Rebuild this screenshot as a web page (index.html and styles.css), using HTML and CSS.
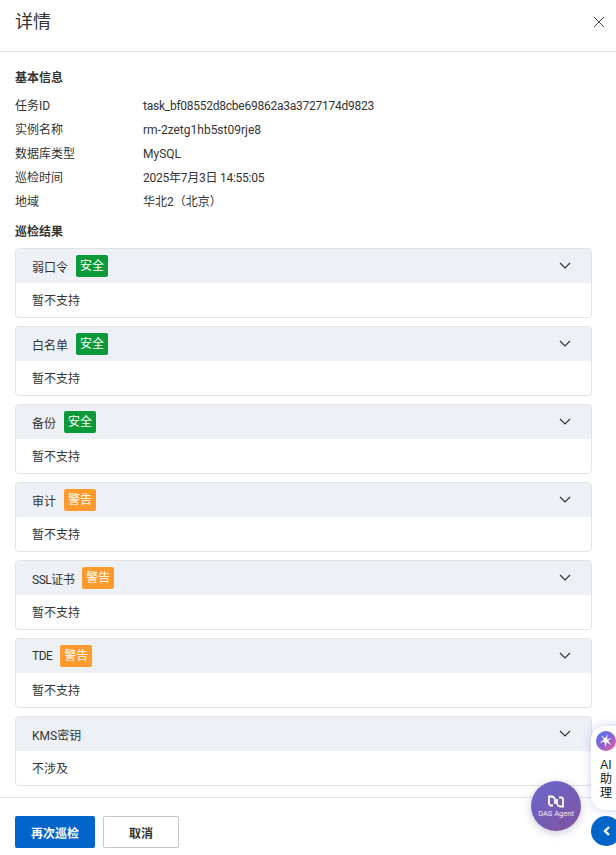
FILE: index.html
```html
<!DOCTYPE html>
<html lang="zh-CN">
<head>
    <meta charset="UTF-8">
    <meta name="viewport" content="width=device-width, initial-scale=1.0">
    <title>详情</title>
    <link rel="stylesheet" href="styles.css">
</head>
<body>
    <div class="drawer">
        <header class="drawer-header">
            <h1>详情</h1>
            <svg class="close-icon" width="12" height="12" viewBox="0 0 12 12"><path d="M1 1l10 10M11 1L1 11" /></svg>
        </header>

        <main class="drawer-body">
            <h2 class="section-title">基本信息</h2>
            <div class="info-list">
                <div class="info-row"><span class="info-label">任务ID</span><span class="tight">task_bf08552d8cbe69862a3a3727174d9823</span></div>
                <div class="info-row"><span class="info-label">实例名称</span><span>rm-2zetg1hb5st09rje8</span></div>
                <div class="info-row"><span class="info-label">数据库类型</span><span>MySQL</span></div>
                <div class="info-row"><span class="info-label">巡检时间</span><span class="tight">2025年7月3日 14:55:05</span></div>
                <div class="info-row"><span class="info-label">地域</span><span>华北2（北京）</span></div>
            </div>

            <h2 class="section-title result-title">巡检结果</h2>
            <div class="panel-list">
                <section class="panel">
                    <div class="panel-head"><span>弱口令</span><span class="tag tag-safe">安全</span><svg class="arrow" width="12" height="8" viewBox="0 0 12 8"><path d="M1 1l5 5 5-5" /></svg></div>
                    <div class="panel-content">暂不支持</div>
                </section>
                <section class="panel">
                    <div class="panel-head"><span>白名单</span><span class="tag tag-safe">安全</span><svg class="arrow" width="12" height="8" viewBox="0 0 12 8"><path d="M1 1l5 5 5-5" /></svg></div>
                    <div class="panel-content">暂不支持</div>
                </section>
                <section class="panel">
                    <div class="panel-head"><span>备份</span><span class="tag tag-safe">安全</span><svg class="arrow" width="12" height="8" viewBox="0 0 12 8"><path d="M1 1l5 5 5-5" /></svg></div>
                    <div class="panel-content">暂不支持</div>
                </section>
                <section class="panel">
                    <div class="panel-head"><span>审计</span><span class="tag tag-warn">警告</span><svg class="arrow" width="12" height="8" viewBox="0 0 12 8"><path d="M1 1l5 5 5-5" /></svg></div>
                    <div class="panel-content">暂不支持</div>
                </section>
                <section class="panel">
                    <div class="panel-head"><span class="label-tight">SSL证书</span><span class="tag tag-warn">警告</span><svg class="arrow" width="12" height="8" viewBox="0 0 12 8"><path d="M1 1l5 5 5-5" /></svg></div>
                    <div class="panel-content">暂不支持</div>
                </section>
                <section class="panel">
                    <div class="panel-head"><span class="label-tight">TDE</span><span class="tag tag-warn">警告</span><svg class="arrow" width="12" height="8" viewBox="0 0 12 8"><path d="M1 1l5 5 5-5" /></svg></div>
                    <div class="panel-content">暂不支持</div>
                </section>
                <section class="panel">
                    <div class="panel-head"><span>KMS密钥</span><svg class="arrow" width="12" height="8" viewBox="0 0 12 8"><path d="M1 1l5 5 5-5" /></svg></div>
                    <div class="panel-content">不涉及</div>
                </section>
            </div>
        </main>

        <footer class="drawer-footer">
            <button type="button" class="btn btn-primary">再次巡检</button>
            <button type="button" class="btn btn-default">取消</button>
        </footer>
    </div>

    <!-- floating helpers -->
    <div class="das-agent">
        <svg width="16" height="13" viewBox="0 0 16 13"><path d="M5 10.500H3A2 2 0 0 1 1 8.500V1.500H3.500C5.500 1.500 7 3.300 7 5.500V9M11 2.500H13A2 2 0 0 1 15 4.500V11.500H12.500C10.500 11.500 9 9.700 9 7.500V4" /></svg>
        <span>DAS Agent</span>
    </div>
    <div class="ai-helper">
        <svg class="ai-icon" width="20" height="20" viewBox="0 0 20 20">
            <defs><linearGradient id="aiGrad" x1="0" y1="0" x2="1" y2="1"><stop offset="0" stop-color="#3f7cf0" /><stop offset="0.5" stop-color="#8a5fd8" /><stop offset="1" stop-color="#f0608f" /></linearGradient></defs>
            <circle cx="10" cy="10" r="10" fill="url(#aiGrad)" />
            <path d="M11.500 3l-.4 5.400 5-1.600-4 3 3.200 4.400-4.500-3-1.800 5.300-.4-5.500-5 .6 4.300-3L5 4.500l4.300 2.800z" fill="#fff" />
        </svg>
        <span>AI</span><span>助</span><span>理</span>
    </div>
    <div class="collapse-btn">
        <svg width="9" height="12" viewBox="0 0 9 12"><path d="M7 2L3 6l4 4" /></svg>
    </div>
</body>
</html>
```

FILE: styles.css
```css
* {
    box-sizing: border-box;
}

html, body {
    margin: 0;
    height: 100%;
    overflow: hidden;
}

body {
    position: relative;
    font-family: Roboto, 'Noto Sans CJK SC', sans-serif;
    font-size: 12px;
    color: #333;
    background: #fff;
}

.drawer {
    display: flex;
    flex-direction: column;
    height: 855px;
}

.drawer-header {
    flex: none;
    display: flex;
    align-items: center;
    justify-content: space-between;
    height: 52px;
    padding: 0 11px 7px 15px;
    border-bottom: 1px solid #e3e3e3;
}

.drawer-header h1 {
    margin: 0;
    font-size: 18px;
    font-weight: 400;
    line-height: 26px;
}

.close-icon path {
    fill: none;
    stroke: #444;
    stroke-width: 1;
}

.drawer-body {
    flex: 1;
    min-height: 0;
    overflow: hidden;
    padding: 17px 24px 0 15px;
}

.section-title {
    margin: 0;
    font-size: 12px;
    font-weight: 700;
    line-height: 18px;
}

.info-list {
    margin-top: 7px;
}

.info-row {
    display: flex;
    height: 24px;
    line-height: 24px;
}

.info-label {
    flex: none;
    width: 128px;
}

/* the digits in the long values run a little narrower */
.tight {
    letter-spacing: -0.25px;
}

.label-tight {
    letter-spacing: -0.5px;
}

.result-title {
    margin-top: 9px;
}

.panel-list {
    display: flex;
    flex-direction: column;
    gap: 8px;
    margin-top: 7px;
}

.panel {
    height: 70px;
    border: 1px solid #e3e3e3;
    border-radius: 4px;
    overflow: hidden;
}

.panel-head {
    display: flex;
    align-items: center;
    gap: 8px;
    height: 34px;
    padding: 0 20px 0 16px;
    background: #edf0f5;
}

.tag {
    height: 22px;
    padding: 0 4px;
    border-radius: 2px;
    font-size: 12px;
    line-height: 22px;
    color: #fff;
}

.tag-safe {
    background: #0a9a3a;
}

.tag-warn {
    background: #ff9a2e;
}

.arrow {
    margin-left: auto;
}

.arrow path {
    fill: none;
    stroke: #333;
    stroke-width: 1.2;
}

.panel-content {
    padding: 0 16px;
    line-height: 36px;
}

.drawer-footer {
    flex: none;
    display: flex;
    gap: 8px;
    height: 58px;
    padding-top: 18px;
    border-top: 1px solid #e3e3e3;
}

.drawer-footer .btn:first-child {
    margin-left: 15px;
}

.btn {
    height: 32px;
    border-radius: 2px;
    font-family: inherit;
    font-size: 12px;
    font-weight: 700;
}

.btn-primary {
    width: 80px;
    border: 0;
    background: #0064c8;
    color: #fff;
}

.btn-default {
    width: 76px;
    border: 1px solid #c1c6cf;
    background: #fff;
    color: #333;
}

.das-agent {
    position: absolute;
    left: 531px;
    top: 781px;
    display: flex;
    flex-direction: column;
    align-items: center;
    gap: 1px;
    width: 50px;
    height: 50px;
    padding-top: 14px;
    border-radius: 50%;
    background: linear-gradient(145deg, #6a68cf, #80529f);
    box-shadow: 0 2px 8px rgba(60, 40, 120, 0.25);
    color: #eeecf8;
    font-size: 7.5px;
    line-height: 10px;
    white-space: nowrap;
}

.das-agent svg {
    display: block;
    flex: none;
}

.das-agent path {
    fill: none;
    stroke: #fff;
    stroke-width: 1.800;
}

.ai-helper {
    position: absolute;
    left: 591px;
    top: 726px;
    display: flex;
    flex-direction: column;
    align-items: center;
    width: 30px;
    height: 84px;
    padding-top: 5px;
    border-radius: 14px 0 0 14px;
    background: #fff;
    box-shadow: 0 0 10px rgba(80, 90, 230, 0.3);
    font-family: 'Liberation Sans', 'Noto Sans CJK SC', sans-serif;
    color: #111;
    line-height: 14px;
}

.ai-icon {
    flex: none;
    margin-bottom: 7px;
}

.collapse-btn {
    position: absolute;
    left: 591px;
    top: 816px;
    display: flex;
    align-items: center;
    justify-content: center;
    width: 30px;
    height: 30px;
    border-radius: 50%;
    background: #0064c8;
}

.collapse-btn path {
    fill: none;
    stroke: #fff;
    stroke-width: 2.400;
}
```
